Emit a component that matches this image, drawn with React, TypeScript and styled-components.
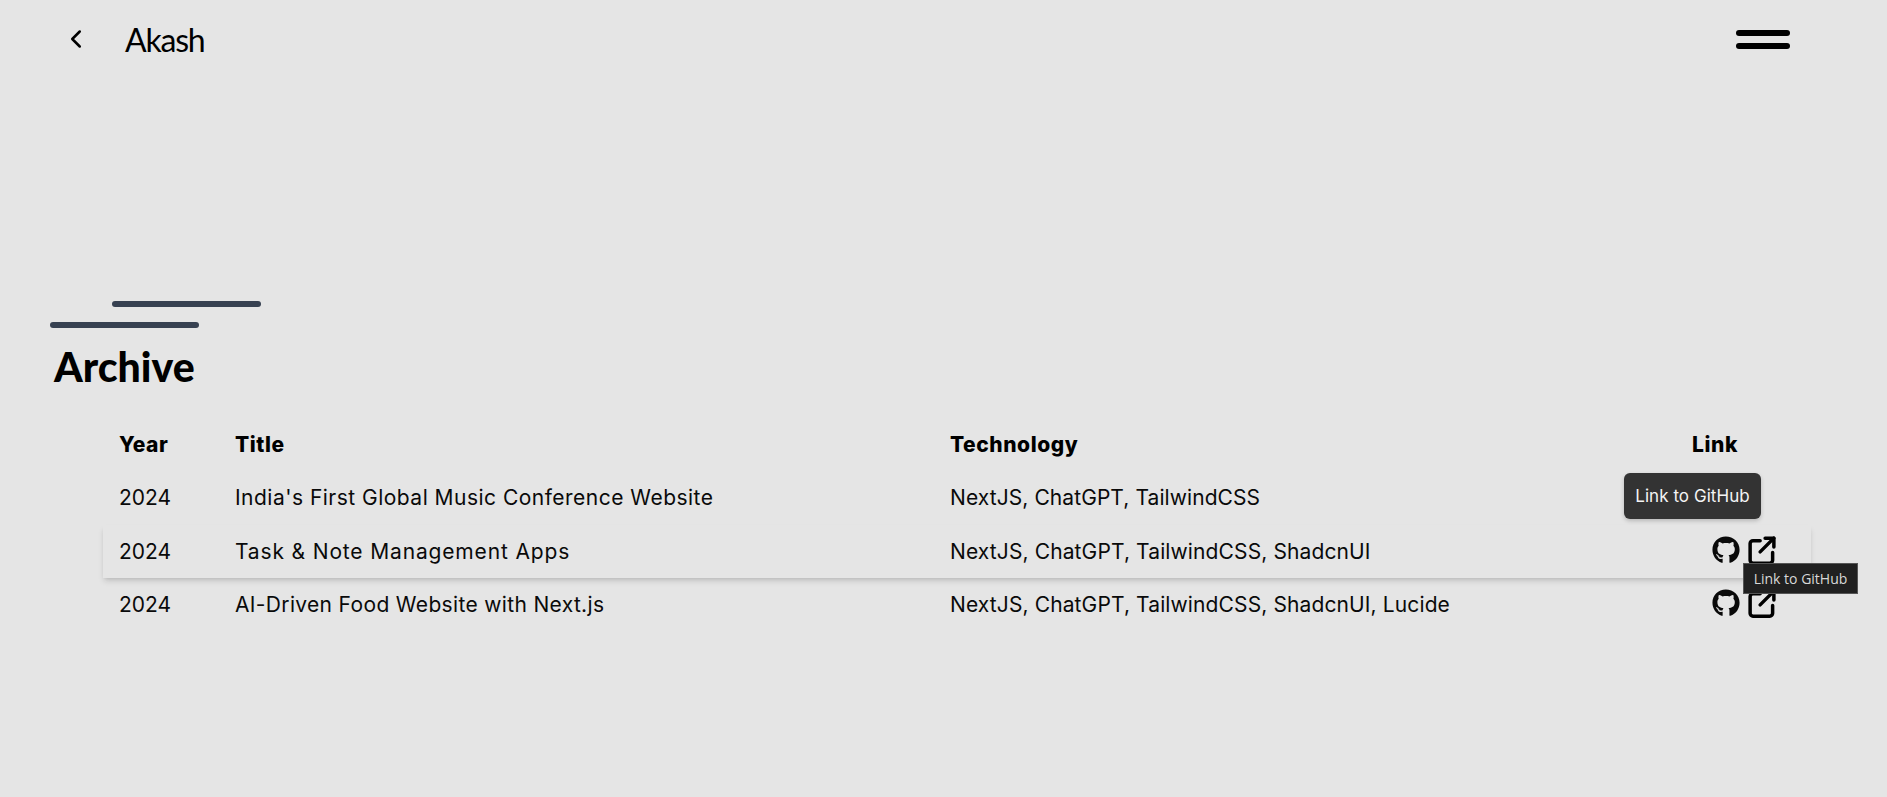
import React from 'react';
import styled, { createGlobalStyle } from 'styled-components';
import { FaGithub } from 'react-icons/fa';
import { ChevronLeft } from 'lucide-react';

const GlobalStyle = createGlobalStyle`
  html, body {
    margin: 0;
    height: 100%;
    background: #e5e5e5;
    overflow: hidden;
  }
`;

const Page = styled.div`
  height: 797px;
  color: #000;
  font-family: "Inter", "Liberation Sans", sans-serif;
`;

const Header = styled.header`
  display: flex;
  align-items: center;
  justify-content: space-between;
  height: 78px;
  padding: 0 97px 0 61px;
`;

const Brand = styled.div`
  display: flex;
  align-items: center;
  gap: 34px;
`;

const BackIcon = styled(ChevronLeft)`
  width: 30px;
  height: 30px;
  stroke-width: 2;
`;

const BrandName = styled.span`
  font-family: "Lato", sans-serif;
  font-size: 32px;
  font-weight: 400;
  letter-spacing: -1.2px;
  color: #000;
`;

const Hamburger = styled.div`
  display: flex;
  flex-direction: column;
  gap: 7px;
`;

const HamburgerBar = styled.span`
  display: block;
  width: 54px;
  height: 6px;
  border-radius: 3px;
  background: #000;
`;

const Section = styled.section`
  padding-top: 223px;
`;

const DecorBar = styled.div<{ $offset: number }>`
  width: 149px;
  height: 6px;
  margin-left: ${(p) => p.$offset}px;
  margin-bottom: 15px;
  border-radius: 3px;
  background: #374151;
`;

const Heading = styled.h1`
  margin: 0 0 0 54px;
  font-family: "Lato", sans-serif;
  font-size: 41px;
  line-height: 48px;
  font-weight: 900;
`;

const TableWrap = styled.div`
  margin: 27px 76px 0 103px;
`;

const Table = styled.table`
  width: 100%;
  table-layout: fixed;
  border-collapse: collapse;
`;

const Col = styled.col<{ $width: number }>`
  width: ${(p) => p.$width}px;
`;

const Th = styled.th<{ $center?: boolean }>`
  height: 53px;
  padding: 0 16px;
  font-size: 21px;
  font-weight: 800;
  letter-spacing: 0.55px;
  text-align: ${(p) => (p.$center ? 'center' : 'left')};
`;

const Row = styled.tr<{ $raised?: boolean }>`
  height: 53.5px;
  box-shadow: ${(p) => (p.$raised ? '0 4px 6px -1px rgba(0,0,0,.14), 0 2px 4px -2px rgba(0,0,0,.1)' : 'none')};
`;

const Td = styled.td<{ $spacing?: number }>`
  position: relative;
  padding: 0 16px;
  font-size: 21px;
  letter-spacing: ${(p) => p.$spacing ?? 0}px;
  color: #0a0a0a;
  white-space: nowrap;
`;

const Links = styled.div`
  display: flex;
  justify-content: flex-end;
  align-items: center;
  gap: 7px;
  padding-right: 18px;
`;

const GithubIcon = styled(FaGithub)`
  width: 28px;
  height: 28px;
  margin-top: -3px;
`;

const OpenSvg = styled.svg`
  width: 30px;
  height: 30px;
  margin-top: -3px;
  fill: none;
  stroke: #000;
  stroke-width: 2.8;
  stroke-linecap: round;
  stroke-linejoin: round;
`;

const OpenIcon: React.FC = () => (
  <OpenSvg viewBox="0 0 24 24">
    <path d="M10.5 4.5H4.8A2.3 2.3 0 0 0 2.5 6.8v13.4a2.3 2.3 0 0 0 2.3 2.3h13.4a2.3 2.3 0 0 0 2.3-2.3V14" />
    <path d="M10.5 13.5 21.5 2.5" />
    <path d="M14.5 2.5h7v7" />
  </OpenSvg>
);

const CardTooltip = styled.div`
  position: absolute;
  left: 1624px;
  top: 473px;
  display: flex;
  align-items: center;
  justify-content: center;
  width: 137px;
  height: 46px;
  border-radius: 6px;
  background: #333;
  box-shadow: 0 2px 4px rgba(0, 0, 0, 0.2);
  color: #f4f4f4;
  font-size: 17px;
  letter-spacing: 0.05px;
`;

const NativeTooltip = styled.div`
  position: absolute;
  left: 1743px;
  top: 563px;
  display: flex;
  align-items: center;
  justify-content: center;
  width: 115px;
  height: 31px;
  border: 1px solid #555;
  box-sizing: border-box;
  background: #202020;
  color: #d8d8d8;
  font-family: "Open Sans", sans-serif;
  font-size: 14px;
`;

const rows = [
  { title: "India's First Global Music Conference Website", titleSpacing: 0.48, tech: 'NextJS, ChatGPT, TailwindCSS', techSpacing: 0.08, links: false },
  { title: 'Task & Note Management Apps', titleSpacing: 0.85, tech: 'NextJS, ChatGPT, TailwindCSS, ShadcnUI', techSpacing: 0.12, links: true, raised: true },
  { title: 'AI-Driven Food Website with Next.js', titleSpacing: 0.34, tech: 'NextJS, ChatGPT, TailwindCSS, ShadcnUI, Lucide', techSpacing: 0.12, links: true },
];

const App: React.FC = () => {
  return (
    <Page>
      <GlobalStyle />
      <Header>
        <Brand>
          <BackIcon />
          <BrandName>Akash</BrandName>
        </Brand>
        <Hamburger>
          <HamburgerBar />
          <HamburgerBar />
        </Hamburger>
      </Header>
      <Section>
        <DecorBar $offset={112} />
        <DecorBar $offset={50} />
        <Heading>Archive</Heading>
        <TableWrap>
          <Table>
            <colgroup>
              <Col $width={116} />
              <Col $width={715} />
              <Col $width={685} />
              <Col $width={192} />
            </colgroup>
            <thead>
              <tr>
                <Th>Year</Th>
                <Th>Title</Th>
                <Th>Technology</Th>
                <Th $center>Link</Th>
              </tr>
            </thead>
            <tbody>
              {rows.map((row) => (
                <Row key={row.title} $raised={row.raised}>
                  <Td>2024</Td>
                  <Td $spacing={row.titleSpacing}>{row.title}</Td>
                  <Td $spacing={row.techSpacing}>{row.tech}</Td>
                  <Td>
                    {row.links && (
                      <Links>
                        <GithubIcon />
                        <OpenIcon />
                      </Links>
                    )}
                  </Td>
                </Row>
              ))}
            </tbody>
          </Table>
        </TableWrap>
      </Section>
      <CardTooltip>Link to GitHub</CardTooltip>
      <NativeTooltip>Link to GitHub</NativeTooltip>
    </Page>
  );
};

export default App;
